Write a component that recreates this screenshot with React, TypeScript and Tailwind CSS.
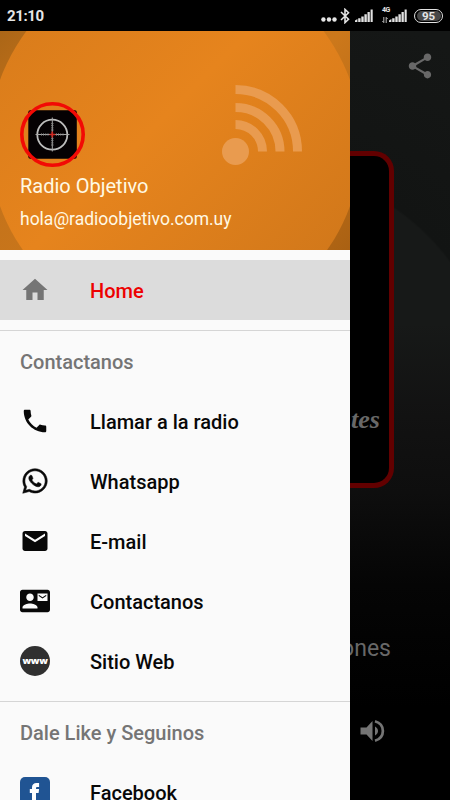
import React from "react";
import { MdHome, MdPhone, MdEmail, MdContactMail, MdShare } from "react-icons/md";
import { FaWhatsapp } from "react-icons/fa";

function SignalBars() {
  return (
    <svg width="18" height="13" viewBox="0 0 18 13" fill="#e2e2e2" aria-hidden="true">
      <path d="M0 13v-1.500L2.400 10v3zM3.200 9.300h2.400V13H3.200zM6.300 7.500h2.400V13H6.300zM9.400 5.300h2.400V13H9.400zM12.500 2.900h2.300V13h-2.300zM15.600 0.400h2.100V13h-2.100z" />
    </svg>
  );
}

function StatusBar() {
  return (
    <header className="flex h-[31px] w-full shrink-0 items-center justify-between bg-black px-[7px] text-[#e6e6e6]">
      <span className="pt-px text-[15px] font-bold leading-4 tracking-[-0.400px]">21:10</span>
      <div className="flex items-center">
        <svg width="16" height="5" viewBox="0 0 16 5" fill="#e6e6e6" className="mt-[8px]">
          <circle cx="2.4" cy="2.5" r="2.200" />
          <circle cx="8" cy="2.5" r="2.200" />
          <circle cx="13.500" cy="2.5" r="2.200" />
        </svg>
        <svg width="10" height="16" viewBox="0 0 10 16" fill="none" stroke="#e2e2e2" strokeWidth="1.600" className="ml-[3px]">
          <path d="M1 4l7.5 7.3L5 14.6V1.4L8.5 4.7 1 12" />
        </svg>
        <div className="-mt-px ml-[5px]"><SignalBars /></div>
        <div className="ml-[9px] flex h-[15px] w-[8px] flex-col justify-between">
          <span className="-mt-px text-[7px] font-bold leading-[7px] tracking-[-0.500px]">4G</span>
          <svg width="6" height="6" viewBox="0 0 6 6" fill="none" stroke="#cfcfcf" strokeWidth="0.9">
            <path d="M1.8 0v5.6M0.4 4l1.4 1.6M4.2 6V.4L5.6 2" />
          </svg>
        </div>
        <div className="-ml-px -mt-px"><SignalBars /></div>
        <div className="ml-[7px] flex h-[14px] w-[29px] items-center justify-center rounded-full border-[1.5px] border-[#e2e2e2] bg-black">
          <div className="flex h-[10px] w-[24px] items-center justify-center rounded-full bg-[#484848] text-[11.500px] font-bold leading-[10px]">95</div>
        </div>
      </div>
    </header>
  );
}

function DrawerHeader() {
  return (
    <section className="relative h-[219px] shrink-0 overflow-hidden bg-[linear-gradient(135deg,#ab6617_0%,#c2711a_18%,#cc781b_60%,#aa6113_100%)]">
      <svg className="absolute inset-0" width="350" height="219" viewBox="0 0 350 219" aria-hidden="true">
        <defs>
          <linearGradient id="disc" x1="0" y1="0" x2="1" y2="1">
            <stop offset="0.1" stopColor="#d97c1b" />
            <stop offset="0.45" stopColor="#e6841d" />
            <stop offset="0.9" stopColor="#d0771a" />
          </linearGradient>
        </defs>
        <circle cx="175" cy="112" r="186" fill="url(#disc)" />
        <g fill="none" stroke="#e99b4f" strokeWidth="9">
          <circle cx="235.5" cy="120.5" r="13.5" fill="#e99b4f" stroke="none" />
          <path d="M235.5 58.5a62 62 0 0 1 62 62" />
          <path d="M235.5 76.5a44.500 44 0 0 1 44.500 44" />
          <path d="M235.5 93.500a27 27 0 0 1 27 27" />
        </g>
      </svg>
      <div className="relative pl-5 pt-[71px] text-[#fff9e4]">
        <svg width="65" height="65" viewBox="0 0 65 65" aria-hidden="true">
          <rect x="8.300" y="8.300" width="48.500" height="48.500" rx="2" fill="#050103" />
          <circle cx="32.500" cy="32.500" r="30.700" fill="none" stroke="#f20a05" strokeWidth="3.600" />
          <circle cx="32.300" cy="32.700" r="15" fill="none" stroke="#bdbdbd" strokeWidth="1.800" />
          <path d="M15.500 32.500h34M32.300 15.500v34" stroke="#a8a8a8" strokeWidth="1" />
          <path d="M21 32.500h8M36 32.500h8M32.300 21v8M32.300 36v8" stroke="#858585" strokeWidth="2.500" strokeDasharray="0.800 1.400" />
          <path d="M29.500 32.500h6M32.300 29.500v6" stroke="#cf2822" strokeWidth="1.700" />
        </svg>
        <div className="mt-[7px] text-[20px] leading-6">Radio Objetivo</div>
        <div className="mt-[9px] text-[17.500px] leading-6">hola@radioobjetivo.com.uy</div>
      </div>
    </section>
  );
}

function SectionTitle({ children }: { children: React.ReactNode }) {
  return (
    <h2 className="mt-[10px] h-[61px] shrink-0 border-t border-[#d5d5d5] pl-5 pt-[19px] text-[20px] font-medium leading-6 text-[#757575]">
      {children}
    </h2>
  );
}

function MenuItem({ icon, label, active = false }: { icon: React.ReactNode; label: string; active?: boolean }) {
  return (
    <button className={`flex h-[60px] w-full shrink-0 items-center pl-5 text-left ${active ? "bg-[#dcdcdc] text-[#ed0000]" : "text-[#080808]"}`}>
      <span className="flex w-[30px] justify-center">{icon}</span>
      <span className="ml-10 pt-[2px] text-[20px] font-medium leading-6">{label}</span>
    </button>
  );
}

function Drawer() {
  return (
    <aside className="flex w-[350px] shrink-0 flex-col overflow-hidden bg-[#fafafa]">
      <DrawerHeader />
      <nav className="flex flex-col pt-[10px]">
        <MenuItem active label="Home" icon={<MdHome size={30} color="#757575" />} />
        <SectionTitle>Contactanos</SectionTitle>
        <MenuItem label="Llamar a la radio" icon={<MdPhone size={30} />} />
        <MenuItem label="Whatsapp" icon={<FaWhatsapp size={28} stroke="currentColor" strokeWidth={10} />} />
        <MenuItem label="E-mail" icon={<MdEmail size={30} />} />
        <MenuItem label="Contactanos" icon={<MdContactMail size={30} />} />
        <MenuItem
          label="Sitio Web"
          icon={<span className="flex size-[30px] items-center justify-center rounded-full bg-[#303030] pb-px font-['Open_Sans',sans-serif] text-[9.500px] font-extrabold leading-3 tracking-[-0.300px] text-white">www</span>}
        />
        <SectionTitle>Dale Like y Seguinos</SectionTitle>
        <MenuItem
          label="Facebook"
          icon={
            <svg width="30" height="30" viewBox="0 0 30 30" aria-hidden="true">
              <rect width="30" height="30" rx="5" fill="#205493" />
              <path d="M12 27V16H9.800v-4H12V10.500C12 7.500 13.700 6 16.600 6h2.500v4h-1.700c-1 0-1.400.500-1.400 1.300V12h3.100l-.5 4H16v11z" fill="#fff" />
            </svg>
          }
        />
      </nav>
    </aside>
  );
}

function Player() {
  return (
    <main className="flex w-[100px] flex-col overflow-hidden bg-[linear-gradient(180deg,transparent_0%,transparent_38%,#121212_50%,#0e0e0e_60%,#050505_72%,#000_88%),radial-gradient(circle_at_-88px_370px,#171918_0px,#171918_233px,#121413_235px,#151716_400px)] text-[#686868]">
      <div className="flex h-[120px] shrink-0 justify-end pr-[15px] pt-5">
        <MdShare size={30} color="#686868" />
      </div>
      <div className="flex h-[337px] w-[44px] shrink-0 items-start justify-end rounded-r-[20px] border-y-[5px] border-r-[5px] border-[#620000] bg-black pr-[9px] pt-[249px] font-['Liberation_Serif',serif] text-[26px] font-bold italic leading-[30px]">
        <span>tes</span>
      </div>
      <div className="mt-[145px] flex h-[32px] w-[41px] shrink-0 items-center justify-end text-[23px] leading-[30px]">ones</div>
      <svg className="ml-[9px] mt-[51px] shrink-0" width="28" height="30" viewBox="0 0 28 30" aria-hidden="true">
        <path d="M1.500 11.500h6L13.500 5v20l-6-6.500h-6z" fill="#747474" />
        <path d="M16 10.500c4 2 4 7 0 9z" fill="#747474" />
        <path d="M16 5.300c10.500 3 10.500 16.400 0 19.400" fill="none" stroke="#747474" strokeWidth="2.700" />
      </svg>
    </main>
  );
}

export default function App() {
  return (
    <div className="flex h-[800px] w-[450px] flex-col overflow-hidden bg-black font-['Roboto',sans-serif]">
      <StatusBar />
      <div className="flex min-h-0 flex-1">
        <Drawer />
        <Player />
      </div>
    </div>
  );
}
